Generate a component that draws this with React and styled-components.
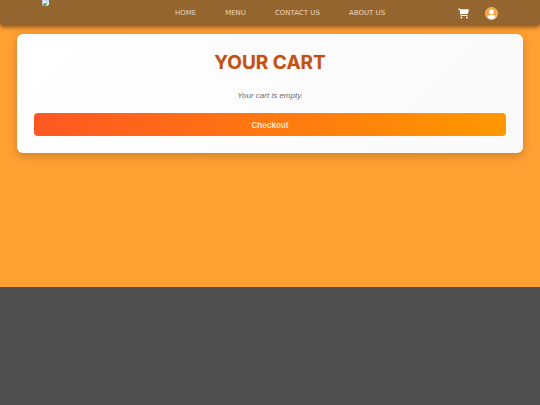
import React from 'react';
import styled, { createGlobalStyle } from 'styled-components';
import { FaCartShopping } from 'react-icons/fa6';

const GlobalStyle = createGlobalStyle`
  * {
    box-sizing: border-box;
  }

  body {
    margin: 0;
    background-color: #ffa033;
    font-family: Inter, 'Liberation Sans', sans-serif;
  }
`;

const Page = styled.div`
  display: flex;
  flex-direction: column;
  min-height: 100vh;
`;

// Navigation bar
const Navbar = styled.header`
  display: flex;
  align-items: center;
  justify-content: space-between;
  height: 26px;
  padding: 0 42px;
  background-color: #95652f;
  border-radius: 0 0 4px 4px;
  box-shadow: 0 1px 5px rgba(0, 0, 0, 0.5);
`;

const LogoLink = styled.a`
  align-self: flex-start;
  display: flex;
  align-items: flex-end;
  width: 60px;
  height: 6px;
  overflow: hidden;
`;

const NavLinks = styled.nav`
  display: flex;
  gap: 29px;
`;

const NavLink = styled.a`
  color: #ecd5b8;
  font-family: 'DejaVu Sans', sans-serif;
  font-size: 7px;
  line-height: 10px;
  text-decoration: none;
  text-transform: uppercase;
`;

const NavActions = styled.div`
  display: flex;
  align-items: center;
  gap: 16px;
`;

const IconLink = styled.a`
  display: flex;
  color: #ffffff;
  font-size: 11px;
`;

// Cart
const Main = styled.main`
  flex: 1;
  padding: 8px 17px;
`;

const CartCard = styled.section`
  padding: 17px;
  border-radius: 6px;
  background: linear-gradient(135deg, #ffffff, #f9f9f9);
  box-shadow: 0 3px 10px rgba(0, 0, 0, 0.2);
  text-align: center;
`;

const CartTitle = styled.h1`
  margin: 0 0 15px;
  color: #bf5115;
  font-size: 19px;
  font-weight: 700;
  line-height: 24px;
  text-transform: uppercase;
  text-shadow: 0 0 2px rgba(255, 120, 30, 0.3);
`;

const EmptyMessage = styled.p`
  margin: 0 0 12px;
  color: #6b6b6b;
  font-family: 'Liberation Sans', sans-serif;
  font-size: 8px;
  font-style: italic;
  line-height: 11px;
`;

const CheckoutButton = styled.button`
  display: block;
  width: 100%;
  height: 23px;
  padding: 0;
  border: none;
  border-radius: 4px;
  background: linear-gradient(90deg, #ff5722, #ff9800);
  color: #ffe9d2;
  font-family: inherit;
  font-size: 8px;
  font-weight: 600;
  cursor: pointer;
`;

const Footer = styled.footer`
  min-height: 118px;
  background-color: #505050;
`;

const LogoPicture = () => (
  <svg width="7" height="8" viewBox="0 0 14 16" aria-hidden="true">
    <path d="M0 0h10l4 4v12H0z" fill="#c3d7f2" />
    <path d="M10 0v4h4z" fill="#ffffff" />
    <path d="M2 8a2 2 0 0 1 4-1 2 2 0 0 1 3 2H2z" fill="#ffffff" />
    <path d="M0 15l6-5 8 3v3H0z" fill="#55a544" />
    <path d="M14 8L7 16h3l4-4z" fill="#ffffff" />
    <path d="M0 0v16h14" fill="none" stroke="#a5a5a5" />
  </svg>
);

// White figure on an orange disc
const ProfileIcon = () => (
  <svg width="13" height="13" viewBox="0 0 26 26" aria-hidden="true">
    <circle cx="13" cy="13" r="12.2" fill="#f5a742" stroke="#fbd094" strokeWidth="1.4" />
    <circle cx="13" cy="10" r="4.8" fill="#ffffff" />
    <path d="M5 20.5c1-3.600 3.600-5 8-5s7 1.400 8 5c-2 2.500-5 3.800-8 3.800s-6-1.300-8-3.800z" fill="#ffffff" />
  </svg>
);

const links = ['Home', 'Menu', 'Contact Us', 'About Us'];

const App = () => {
  return (
    <>
      <GlobalStyle />
      <Page>
        <Navbar>
          <LogoLink href="#home" aria-label="Logo">
            <LogoPicture />
          </LogoLink>
          <NavLinks>
            {links.map((link) => (
              <NavLink key={link} href="#">{link}</NavLink>
            ))}
          </NavLinks>
          <NavActions>
            <IconLink href="#cart" aria-label="Cart"><FaCartShopping /></IconLink>
            <IconLink href="#profile" aria-label="Profile"><ProfileIcon /></IconLink>
          </NavActions>
        </Navbar>

        <Main>
          <CartCard>
            <CartTitle>Your Cart</CartTitle>
            <EmptyMessage>Your cart is empty.</EmptyMessage>
            <CheckoutButton type="button">Checkout</CheckoutButton>
          </CartCard>
        </Main>

        <Footer />
      </Page>
    </>
  );
};

export default App;
